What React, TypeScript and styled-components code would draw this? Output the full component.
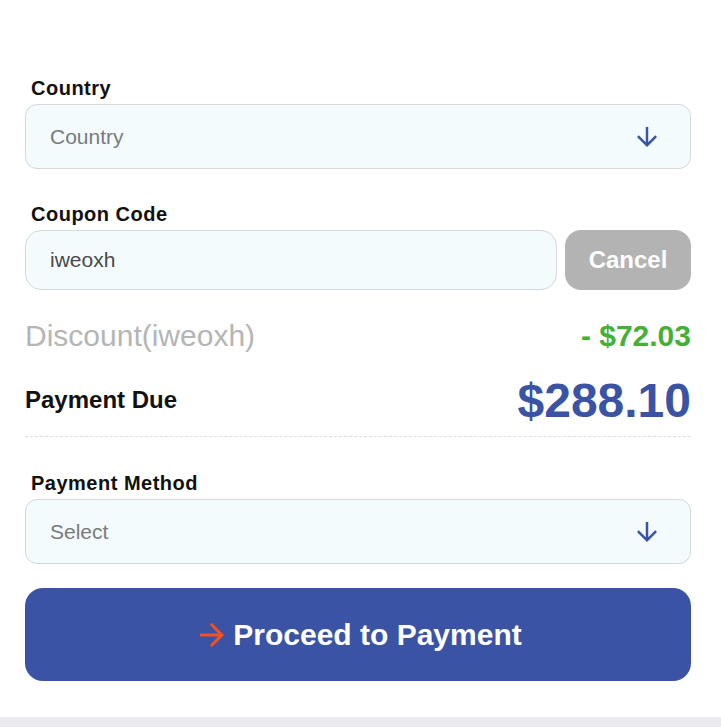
import React from 'react';
import styled, { createGlobalStyle } from 'styled-components';
import { MdArrowDownward, MdArrowForward } from 'react-icons/md';

const GlobalStyle = createGlobalStyle`
  html, body {
    margin: 0;
    padding: 0;
    background: #ffffff;
    font-family: "Liberation Sans", Arial, Helvetica, sans-serif;
  }
`;

const Page = styled.div`
  width: 100%;
  min-height: 727px;
  display: flex;
  flex-flow: column nowrap;
  background: #ebebef;
`;

const Card = styled.div`
  display: flex;
  flex-flow: column nowrap;
  background: #ffffff;
  padding: 77px 30px 36px 25px;
`;

const Field = styled.div<{ $top?: number }>`
  display: flex;
  flex-flow: column nowrap;
  margin-top: ${(p) => p.$top ?? 0}px;
`;

const Label = styled.label`
  display: block;
  margin: 0 0 4px 6px;
  font-size: 20px;
  line-height: 23px;
  font-weight: 700;
  letter-spacing: 0.5px;
  color: #111111;
`;

const SelectBox = styled.div`
  height: 65px;
  box-sizing: border-box;
  display: flex;
  flex-flow: row nowrap;
  align-items: center;
  justify-content: space-between;
  padding: 0 28px 0 24px;
  background: #f3fbfd;
  border: 1px solid #d3d8db;
  border-radius: 12px;
  font-size: 21px;
  color: #7a7a7a;
  svg {
    color: #3b53a5;
  }
`;

const CouponRow = styled.div`
  display: flex;
  flex-flow: row nowrap;
  gap: 8px;
  height: 60px;
`;

const CouponInput = styled.div`
  flex: 1;
  box-sizing: border-box;
  display: flex;
  align-items: center;
  padding: 0 24px;
  background: #f3fbfd;
  border: 1px solid #d3d8db;
  border-radius: 16px;
  font-size: 21px;
  color: #4a4a4a;
`;

const CancelButton = styled.button`
  width: 126px;
  border: none;
  border-radius: 16px;
  background: #b3b3b3;
  color: #ffffff;
  font-family: inherit;
  font-size: 24px;
  font-weight: 700;
  cursor: pointer;
`;

const SummaryRow = styled.div<{ $top: number; $height: number }>`
  display: flex;
  flex-flow: row nowrap;
  align-items: center;
  justify-content: space-between;
  margin-top: ${(p) => p.$top}px;
  height: ${(p) => p.$height}px;
`;

const DiscountLabel = styled.span`
  font-size: 30px;
  color: #b5b5b5;
`;

const DiscountValue = styled.span`
  font-size: 30px;
  font-weight: 700;
  color: #44b035;
`;

const DueLabel = styled.span`
  font-size: 24px;
  font-weight: 700;
  color: #111111;
`;

const DueValue = styled.span`
  font-size: 48px;
  font-weight: 700;
  color: #3b53a5;
`;

const Divider = styled.hr`
  margin: 8px 0 0 0;
  border: none;
  border-top: 1px dashed #dedede;
`;

const ProceedButton = styled.button`
  margin-top: 24px;
  height: 93px;
  border: none;
  border-radius: 18px;
  background: #3b53a5;
  color: #ffffff;
  font-family: inherit;
  font-size: 30px;
  font-weight: 700;
  display: flex;
  flex-flow: row nowrap;
  align-items: center;
  justify-content: center;
  gap: 3px;
  cursor: pointer;
  svg {
    color: #f4511e;
  }
`;

export default function App() {
  return (
    <>
      <GlobalStyle />
      <Page>
        <Card>
          <Field>
            <Label>Country</Label>
            <SelectBox>
              <span>Country</span>
              <MdArrowDownward size={30} />
            </SelectBox>
          </Field>

          <Field $top={34}>
            <Label>Coupon Code</Label>
            <CouponRow>
              <CouponInput>iweoxh</CouponInput>
              <CancelButton>Cancel</CancelButton>
            </CouponRow>
          </Field>

          <SummaryRow $top={29} $height={34}>
            <DiscountLabel>Discount(iweoxh)</DiscountLabel>
            <DiscountValue>- $72.03</DiscountValue>
          </SummaryRow>

          <SummaryRow $top={19} $height={56}>
            <DueLabel>Payment Due</DueLabel>
            <DueValue>$288.10</DueValue>
          </SummaryRow>
          <Divider />

          <Field $top={35}>
            <Label>Payment Method</Label>
            <SelectBox>
              <span>Select</span>
              <MdArrowDownward size={30} />
            </SelectBox>
          </Field>

          <ProceedButton>
            <MdArrowForward size={36} />
            <span>Proceed to Payment</span>
          </ProceedButton>
        </Card>
      </Page>
    </>
  );
}
